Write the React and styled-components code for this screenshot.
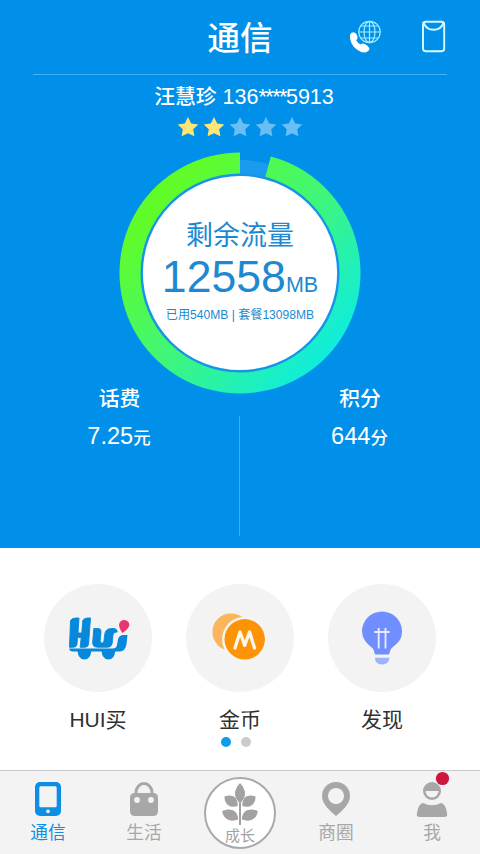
import React from "react";
import styled, { createGlobalStyle } from "styled-components";

const Global = createGlobalStyle`
  * { box-sizing: border-box; }
  body {
    margin: 0;
    background: #fff;
    font-family: "Liberation Sans", "Noto Sans CJK SC", sans-serif;
  }
`;

const Screen = styled.div`
  width: 480px;
  height: 854px;
  display: flex;
  flex-direction: column;
  overflow: hidden;
  background: #fff;
`;

const Hero = styled.section`
  height: 548px;
  flex: none;
  display: flex;
  flex-direction: column;
  align-items: center;
  background: #0190e9;
  color: #fff;
`;

const Header = styled.header`
  width: 414px;
  height: 75px;
  flex: none;
  display: grid;
  grid-template-columns: 1fr auto 1fr;
  border-bottom: 1px solid #43b2f3;
`;

const Title = styled.h1`
  grid-column: 2;
  margin: 0;
  font-size: 32.5px;
  font-weight: 500;
  line-height: 78px;
`;

const Actions = styled.div`
  display: flex;
  justify-content: flex-end;
  gap: 39px;
  padding-top: 19px;
`;

const Account = styled.div`
  display: flex;
  align-items: baseline;
  gap: 6px;
  height: 22px;
  margin: 11px 0 0 8px;
  font-size: 20.8px;
  font-weight: 500;
  line-height: 22px;
  white-space: pre;
`;

const PhoneNumber = styled.span`
  font-size: 21.5px;
  font-weight: 400;
`;

const Mask = styled.span`
  letter-spacing: -1.5px;
`;

const Stars = styled.div`
  display: flex;
  gap: 4px;
  margin-top: 8px;
  height: 22px;
`;

const Gauge = styled.div`
  display: grid;
  width: 242px;
  height: 242px;
  margin-top: 14px;
  flex: none;
  & > * { grid-area: 1 / 1; }
`;

const GaugeText = styled.div`
  display: flex;
  flex-direction: column;
  align-items: center;
  padding-top: 67px;
  color: #1c89d2;
  z-index: 1;
`;

const GaugeLabel = styled.div`
  font-size: 27px;
  line-height: 34px;
`;

const Amount = styled.div`
  display: flex;
  align-items: baseline;
  height: 46px;
  margin-top: 1px;
  line-height: 46px;
  font-size: 44.6px;
  small { font-size: 21.5px; }
`;

const Usage = styled.div`
  margin-top: 7px;
  font-size: 12.1px;
  line-height: 16px;
  white-space: pre;
`;

const Balances = styled.div`
  display: flex;
  width: 100%;
  height: 154px;
  margin-top: -12px;
`;

const Divider = styled.div`
  width: 1px;
  height: 120px;
  margin-top: 34px;
  background: #43aeef;
`;

const Balance = styled.div`
  width: ${(p) => p.$width}px;
  padding-top: 1px;
  display: flex;
  flex-direction: column;
  align-items: center;
`;

const BalanceLabel = styled.div`
  font-size: 20.8px;
  font-weight: 500;
  line-height: 32px;
`;

const BalanceValue = styled.div`
  margin: 5px 1px 0 0;
  font-size: 23.6px;
  line-height: 32px;
  small { font-size: 17.5px; font-weight: 500; }
`;

const Services = styled.section`
  height: 222px;
  flex: none;
  display: flex;
  flex-direction: column;
  align-items: center;
`;

const ServiceRow = styled.div`
  display: flex;
  gap: 34px;
  margin-top: 36px;
`;

const Service = styled.div`
  width: 108px;
  display: flex;
  flex-direction: column;
  align-items: center;
`;

const ServiceDisc = styled.div`
  width: 108px;
  height: 108px;
  border-radius: 50%;
  background: #f3f3f3;
`;

const ServiceLabel = styled.div`
  margin-top: 12px;
  font-size: 21px;
  line-height: 32px;
  color: #303030;
`;

const Dots = styled.div`
  display: flex;
  gap: 10px;
  margin: 1px 0 0 -8px;
`;

const Dot = styled.span`
  width: 10px;
  height: 10px;
  border-radius: 50%;
  background: ${(p) => (p.$active ? "#0c9eea" : "#cbcbcb")};
`;

const TabBar = styled.nav`
  height: 84px;
  flex: none;
  display: grid;
  grid-template-columns: repeat(5, 96px);
  border-top: 1px solid #c9c9cb;
  background: #f3f3f3;
`;

const Tab = styled.div`
  display: flex;
  flex-direction: column;
  align-items: center;
  color: ${(p) => (p.$active ? "#0c8ee4" : "#a7a7a7")};
`;

const TabLabel = styled.span`
  margin-top: 1px;
  font-size: 17.7px;
  line-height: 24px;
`;

const GrowthTab = styled.div`
  width: 72px;
  height: 72px;
  margin: 6px auto 0;
  border: 2px solid #a9a9a9;
  border-radius: 50%;
  background: #fff;
  display: flex;
  flex-direction: column;
  align-items: center;
  color: #a2a2a2;
  font-size: 15px;
  line-height: 21px;
`;

const PhoneGlobe = () => (
  <svg width="34" height="35" viewBox="348 19 34 35" fill="none">
    <g stroke="#a4ecff" strokeWidth="1.2">
      <circle cx="369.5" cy="32" r="10.7" />
      <ellipse cx="369.5" cy="32" rx="5.5" ry="10.7" />
      <path d="M369.5 21.3v21.4M358.8 32h21.4M361 26h17M361 38h17" />
    </g>
    <path
      d="M349.9 35.5q.7-3.2 3.7-3.3 2.6.5 3.9 4.3.4 2.3-1.3 3.8 1.3 2.6 4.3 4.1 2.2-1.5 4.4-.3 3.3 1.8 4.6 4.2-.3 3.2-4.2 4.2-4 .5-8.5-2.9-7.3-5.8-6.900-14.100Z"
      fill="#fff"
    />
  </svg>
);

const Envelope = () => (
  <svg width="26" height="35" viewBox="421 19 26 35" fill="none" stroke="#d9faff" strokeWidth="1.9">
    <rect x="423" y="21.8" width="21.2" height="29.4" rx="2.6" />
    <path d="M423.8 23q2.4 6.8 9.800 6.800T443.400 23" />
  </svg>
);

const Star = ({ on }) => (
  <svg width="22" height="22" viewBox="0 0 22 22">
    <path
      d="M11 .9 14.2 7.4 21.3 8.4 16.2 13.3 17.4 20.3 11 17.2 4.6 20.3 5.8 13.3 .7 8.4 7.8 7.4Z"
      fill={on ? "#fee676" : "#69bff5"}
    />
  </svg>
);

const Ring = () => (
  <svg width="242" height="242" viewBox="-121 -121 242 242">
    <defs>
      <linearGradient id="ring" x1="-80" y1="-70" x2="82" y2="84" gradientUnits="userSpaceOnUse">
        <stop offset="0" stopColor="#60fc29" />
        <stop offset=".5" stopColor="#3ff67a" />
        <stop offset="1" stopColor="#10edda" />
      </linearGradient>
    </defs>
    <path d="M0-113A113 113 0 0 1 29-109L25-94H0Z" fill="#1a9bed" />
    <path
      d="M30.8-116.5A120.5 120.5 0 1 1 0-120.5V-98.8A98.8 98.8 0 1 0 25.2-95.5Z"
      fill="url(#ring)"
    />
    <circle r="98.3" fill="#fff" stroke="#1594e8" strokeWidth="2.4" />
  </svg>
);

const HuiIcon = () => (
  <svg width="108" height="108" viewBox="44 584 108 108">
    <g fill="#0788da">
      <g stroke="#0788da" strokeWidth=".9" strokeLinejoin="round">
        <path d="M70.500 620.500q1.500-2.500 5-2.500h3.500L78 633h3.800L82.800 620.500q1.200-2.500 4.500-2.500h3.200L88.500 644.300q-.4 3-3.800 3h-4.500l1-9.800h-3.700l-.5 6.800q-.4 3-3.800 3H69.500Z" />
        <path d="M93.800 628.500H98q3.200 0 3 3l-.8 9q-.2 2.600 1.700 2.600 2 0 2.200-2.600l.5-5.300q.5-6.700 7-6.700h2.500q2.800.2 3.200 3.400-3.900-.2-4.300 3l-.8 8q-.5 4.300-5.200 4.300H97.500q-5.200 0-4.800-5.200Z" />
      </g>
      <path d="M118 639.500q1-4.600 5.500-4.600h4l-1 9q-.9 7.700-8 7.700H72.500q-2.800 0-3.300-3h43.500q3.500 0 4.200-3Z" />
      <path d="M77.500 651h13.800q-.8 8.200-6.900 8.600-6.100-.4-6.900-8.600ZM101.500 651h13.800q-.8 8.200-6.900 8.600-6.100-.4-6.900-8.600Z" />
    </g>
    <path d="M122.300 633q-3.600-5.800-3.200-8.600.8-4.500 5.300-4.500 4.700.5 4.900 4.800-.2 3.800-7 8.300Z" fill="#e93671" />
  </svg>
);

const CoinIcon = () => (
  <svg width="108" height="108" viewBox="186 584 108 108">
    <circle cx="231" cy="632" r="18.6" fill="#fbb55d" />
    <circle cx="244.7" cy="639.3" r="22.6" fill="#f7f5f2" />
    <circle cx="244.7" cy="639.3" r="20.2" fill="#fd9306" />
    <path
      d="m235 648 5-16 4.7 13.4 4.8-13.4 5 16"
      fill="none"
      stroke="#fff8ea"
      strokeWidth="3.3"
      strokeLinecap="round"
      strokeLinejoin="round"
    />
  </svg>
);

const BulbIcon = () => (
  <svg width="108" height="108" viewBox="328 584 108 108">
    <path
      d="M375.5 654.5q-1-.2-1.2-2.5-.5-3.4-5.2-6.7A20 20 0 0 1 362 631.5a20 20 0 0 1 40 0q0 8.5-7 13.8-4.7 3.3-5.2 6.7-.2 2.3-1.2 2.5Z"
      fill="#708eff"
    />
    <path d="M374.8 657.8h14.6q-.5 6.6-7.3 6.7-6.8-.1-7.3-6.7Z" fill="#9cb4fb" />
    <path d="M374.3 632h15.3M378.7 628v20.5M385.5 628v20.5" stroke="#e8edff" strokeWidth="1.8" />
  </svg>
);

const TabIcon = ({ children, x }) => (
  <svg width="48" height="49" viewBox={`${x} 771 48 49`} fill="currentColor">
    {children}
  </svg>
);

const Leaves = () => (
  <svg width="44" height="46" viewBox="218.5 779 44 46" fill="currentColor">
    <path d="M240.500 783q5 5.500 5 10.500 0 5-4 8.700v23h-2v-23q-4-3.700-4-8.700 0-5 5-10.500Z" />
    <path d="M225 796.500c5-1.800 9-1 11.300 1.800q2.200 3 1.900 7.700c-4.500 1.500-8 .6-10.400-1.600q-3-2.800-2.800-7.900Z" />
    <path d="M256 796.500c-5-1.800-9-1-11.300 1.800q-2.200 3-1.900 7.700c4.500 1.500 8 .6 10.400-1.600q3-2.800 2.800-7.900Z" />
    <path d="M222.700 811c5-2.400 10-2 12.800.6q3 2.800 3.200 8c-5 1.800-9.200 1.300-12-1q-3.600-2.800-4-7.600Z" />
    <path d="M258.300 811c-5-2.400-10-2-12.800.6q-3 2.800-3.200 8c5 1.800 9.200 1.300 12-1q3.600-2.800 4-7.600Z" />
  </svg>
);

export default function App() {
  return (
    <>
      <Global />
      <Screen>
        <Hero>
          <Header>
            <Title>通信</Title>
            <Actions>
              <PhoneGlobe />
              <Envelope />
            </Actions>
          </Header>
          <Account>
            <span>汪慧珍</span>
            <PhoneNumber>
              136<Mask>****</Mask>5913
            </PhoneNumber>
          </Account>
          <Stars>
            {[1, 2, 3, 4, 5].map((n) => (
              <Star key={n} on={n <= 2} />
            ))}
          </Stars>
          <Gauge>
            <Ring />
            <GaugeText>
              <GaugeLabel>剩余流量</GaugeLabel>
              <Amount>
                12558<small>MB</small>
              </Amount>
              <Usage>已用540MB | 套餐13098MB</Usage>
            </GaugeText>
          </Gauge>
          <Balances>
            <Balance $width={239}>
              <BalanceLabel>话费</BalanceLabel>
              <BalanceValue>
                7.25<small>元</small>
              </BalanceValue>
            </Balance>
            <Divider />
            <Balance $width={240}>
              <BalanceLabel>积分</BalanceLabel>
              <BalanceValue>
                644<small>分</small>
              </BalanceValue>
            </Balance>
          </Balances>
        </Hero>

        <Services>
          <ServiceRow>
            <Service>
              <ServiceDisc><HuiIcon /></ServiceDisc>
              <ServiceLabel>HUI买</ServiceLabel>
            </Service>
            <Service>
              <ServiceDisc><CoinIcon /></ServiceDisc>
              <ServiceLabel>金币</ServiceLabel>
            </Service>
            <Service>
              <ServiceDisc><BulbIcon /></ServiceDisc>
              <ServiceLabel>发现</ServiceLabel>
            </Service>
          </ServiceRow>
          <Dots>
            <Dot $active />
            <Dot />
          </Dots>
        </Services>

        <TabBar>
          <Tab $active>
            <TabIcon x={24}>
              <rect x="35" y="782" width="26" height="34" rx="5" />
              <rect x="39.3" y="786.3" width="17.4" height="21" rx="1.5" fill="#f3f3f3" />
              <circle cx="48" cy="811.3" r="1.9" fill="#f3f3f3" />
            </TabIcon>
            <TabLabel>通信</TabLabel>
          </Tab>
          <Tab>
            <TabIcon x={120}>
              <path d="M136 796v-3.5a8 9 0 0 1 16 0v3.5" fill="none" stroke="currentColor" strokeWidth="3" />
              <rect x="130" y="793" width="28" height="23" rx="4.5" />
              <circle cx="137" cy="800" r="2.9" fill="#f3f3f3" />
              <circle cx="151" cy="800" r="2.9" fill="#f3f3f3" />
            </TabIcon>
            <TabLabel>生活</TabLabel>
          </Tab>
          <GrowthTab>
            <Leaves />
            <span>成长</span>
          </GrowthTab>
          <Tab>
            <TabIcon x={312}>
              <path d="M336 816q-4.5-3.5-9-8.5-5-6-5-11.5a14 14 0 0 1 28 0q0 5.500-5 11.500-4.500 5-9 8.500Z" />
              <circle cx="336" cy="796" r="8" fill="#f3f3f3" />
            </TabIcon>
            <TabLabel>商圈</TabLabel>
          </Tab>
          <Tab>
            <TabIcon x={408}>
              <circle cx="432" cy="791" r="9" />
              <path d="M425.5 791h13a6.5 6.5 0 0 1-13 0Z" fill="#f3f3f3" />
              <path d="M423 803q9 4.500 18 0 4 1 5.200 6.500 1 4 1 5 0 2.500-3 2.500h-24.400q-3 0-3-2.500 0-1 1-5 1.200-5.500 5.200-6.500Z" />
              <circle cx="442.5" cy="778.5" r="6.6" fill="#ce173f" />
            </TabIcon>
            <TabLabel>我</TabLabel>
          </Tab>
        </TabBar>
      </Screen>
    </>
  );
}
